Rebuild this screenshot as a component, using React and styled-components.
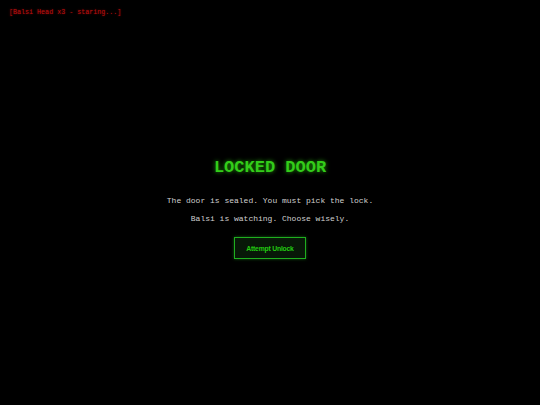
import styled, { createGlobalStyle } from 'styled-components';

const GlobalStyle = createGlobalStyle`
    html, body {
        margin: 0;
        padding: 0;
        background: #000;
    }
    #root {
        width: 540px;
        height: 405px;
    }
`;

const Screen = styled.div`
    width: 540px;
    height: 405px;
    background: #000;
    display: flex;
    flex-direction: column;
    font-family: 'Courier New', 'Liberation Mono', monospace;
`;

const StatusLine = styled.div`
    padding: 8px 0 0 9px;
    height: 10px;
    font-size: 6.7px;
    line-height: 8px;
    color: #b81010;
    text-shadow: 0 0 2px rgba(255, 0, 0, 0.5);
`;

const Room = styled.div`
    flex: 1;
    display: flex;
    flex-direction: column;
    align-items: center;
    padding-top: 140px;
`;

const Title = styled.h1`
    margin: 0;
    font-size: 17px;
    line-height: 20px;
    font-weight: bold;
    color: #33cc1a;
    text-shadow: 0 0 4px rgba(60, 255, 20, 0.6);
`;

const Line = styled.p`
    margin: ${p => p.$top}px 0 0;
    font-size: 8px;
    line-height: 10px;
    color: #cfcfcf;
`;

const UnlockButton = styled.button`
    margin-top: 13px;
    width: 72px;
    height: 22px;
    padding: 0;
    background: #081808;
    border: 1px solid #1fae1f;
    color: #22cc11;
    font-family: 'Liberation Sans', Arial, sans-serif;
    font-size: 6.8px;
    font-weight: bold;
    letter-spacing: -0.2px;
    box-shadow: 0 0 3px rgba(40, 200, 40, 0.45);
    cursor: pointer;
`;

const App = () => {
    return (
        <>
            <GlobalStyle />
            <Screen>
                <StatusLine>[Balsi Head x3 - staring...]</StatusLine>
                <Room>
                    <Title>LOCKED DOOR</Title>
                    <Line $top={18}>The door is sealed. You must pick the lock.</Line>
                    <Line $top={8}>Balsi is watching. Choose wisely.</Line>
                    <UnlockButton>Attempt Unlock</UnlockButton>
                </Room>
            </Screen>
        </>
    );
};

export default App;
